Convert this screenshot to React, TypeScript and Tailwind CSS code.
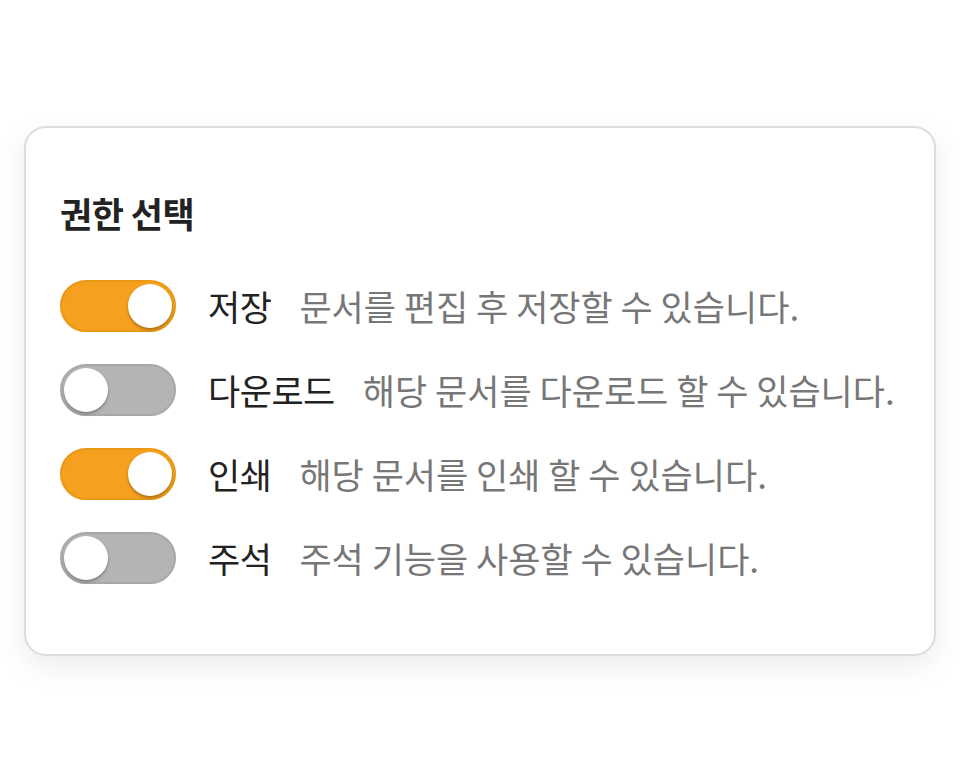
import React, { useState } from 'react';

const items = [
  { label: '저장', desc: '문서를 편집 후 저장할 수 있습니다.', on: true },
  { label: '다운로드', desc: '해당 문서를 다운로드 할 수 있습니다.', on: false },
  { label: '인쇄', desc: '해당 문서를 인쇄 할 수 있습니다.', on: true },
  { label: '주석', desc: '주석 기능을 사용할 수 있습니다.', on: false },
];

const Toggle: React.FC<{ on: boolean; onClick: () => void }> = ({ on, onClick }) => (
  <button
    onClick={onClick}
    className={`relative w-[116px] h-[52px] rounded-full border-2 flex-shrink-0 ${
      on ? 'bg-[#f5a11f] border-[#eb9817]' : 'bg-[#b4b4b4] border-[#a8a8a8]'
    }`}
  >
    <span
      className={`absolute top-[2px] w-[44px] h-[44px] rounded-full bg-white shadow-[0_2px_3px_rgba(0,0,0,0.3)] ${
        on ? 'left-[66px]' : 'left-[2px]'
      }`}
    />
  </button>
);

export default function App() {
  const [state, setState] = useState(items.map((i) => i.on));

  return (
    <div className="w-[960px] h-[780px] bg-white pt-[126px] px-[24px] font-['Noto_Sans_CJK_KR',sans-serif]">
      <div className="w-[912px] h-[530px] rounded-[22px] border-2 border-[#dcdcdc] bg-white shadow-[0_10px_30px_rgba(0,0,0,0.08)] pl-[34px] pt-[60px]">
        <h2 className="text-[35px] leading-[50px] font-bold text-[#222] tracking-[-0.5px]">권한 선택</h2>
        <div className="mt-[42px] flex flex-col gap-[32px]">
          {items.map((it, i) => (
            <div key={it.label} className="flex items-center h-[52px]">
              <Toggle on={state[i]} onClick={() => setState(state.map((s, j) => (j === i ? !s : s)))} />
              <span className="ml-[32px] text-[35px] text-[#222] tracking-[-0.5px]">{it.label}</span>
              <span className="ml-[28px] text-[35px] text-[#777]">{it.desc}</span>
            </div>
          ))}
        </div>
      </div>
    </div>
  );
}
